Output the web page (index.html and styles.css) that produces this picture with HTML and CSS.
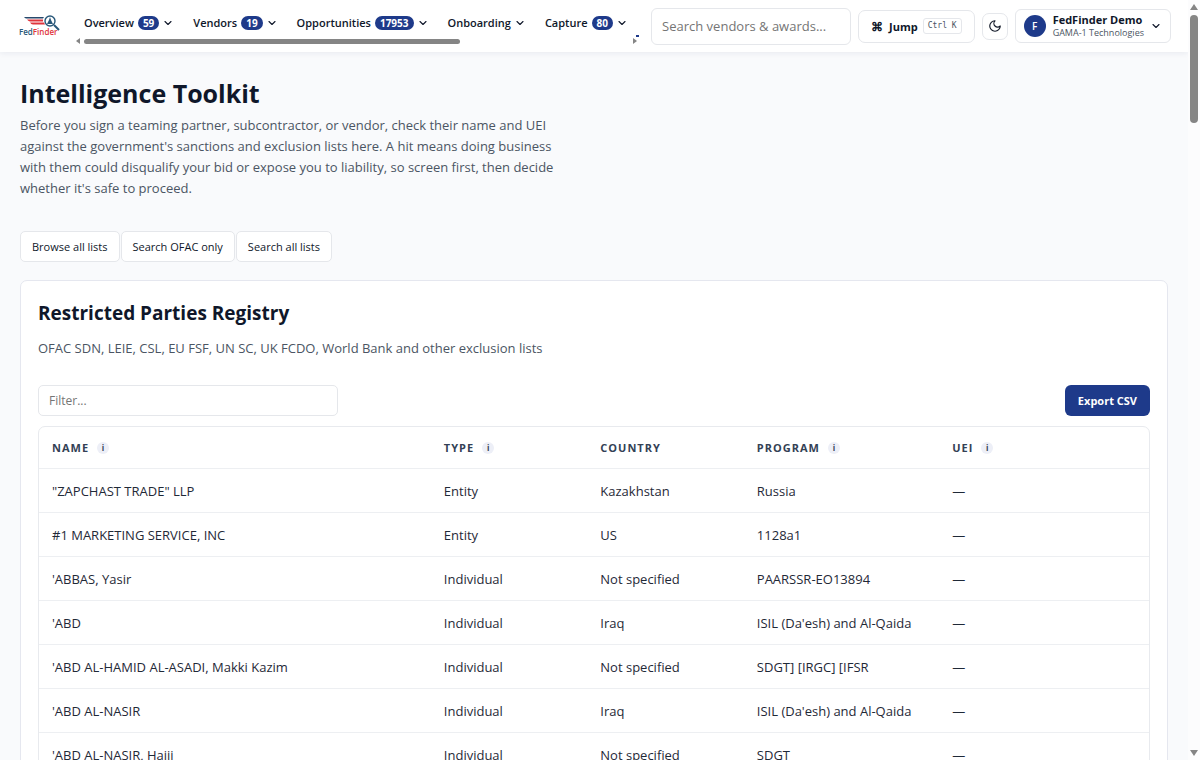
FILE: index.html
```html
<!DOCTYPE html>
<html lang="en">
<head>
<meta charset="utf-8">
<title>Intelligence Toolkit - FedFinder</title>
<link rel="stylesheet" href="styles.css">
</head>
<body>
<svg class="defs" aria-hidden="true">
  <symbol id="chevron" viewBox="0 0 8 8"><path d="M1 2.5 4 5.5 7 2.5" fill="none" stroke="currentColor" stroke-width="1.1" stroke-linecap="round" stroke-linejoin="round"/></symbol>
</svg>
<div class="app">
  <div class="page">
    <header class="topbar">
      <a class="logo" href="#" aria-label="FedFinder home">
        <svg viewBox="0 0 42 22" width="42" height="22">
          <path d="M6 2h20l-1 1.500H8Q7 3 6 2z" fill="#27496d"/>
          <path d="M9 4.500h16v2H12Q10 6 9 4.500zM12 7.500h14l1 2H15q-2 0-3-2z" fill="#e0343c"/>
          <circle cx="32" cy="6" r="5" fill="#fff" stroke="#285779" stroke-width="1.400"/>
          <path d="m32 2 1 3 2 4h-6l2-4z" fill="#285779"/>
          <path d="m36 10 5 5" stroke="#285779" stroke-width="2"/>
          <text x="1" y="20" class="logo-text"><tspan fill="#285779">Fed</tspan><tspan fill="#e0343c">Finder</tspan></text>
        </svg>
      </a>
      <div class="nav-wrap">
        <nav class="nav">
          <button type="button">Overview <span class="badge">59</span><svg class="chev"><use href="#chevron"/></svg></button>
          <button type="button">Vendors <span class="badge">19</span><svg class="chev"><use href="#chevron"/></svg></button>
          <button type="button">Opportunities <span class="badge">17953</span><svg class="chev"><use href="#chevron"/></svg></button>
          <button type="button">Onboarding <svg class="chev"><use href="#chevron"/></svg></button>
          <button type="button">Capture <span class="badge">80</span><svg class="chev"><use href="#chevron"/></svg></button>
        </nav>
        <div class="hscroll" aria-hidden="true">
          <svg width="4" height="6" viewBox="0 0 4 6"><path d="M4 0v6L0 3z" fill="#858585"/></svg>
          <div class="htrack"><div class="hthumb"></div></div>
          <svg width="4" height="6" viewBox="0 0 4 6"><path d="M0 0v6l4-3z" fill="#858585"/></svg>
          <span class="peek"></span>
        </div>
      </div>
      <input class="search" type="search" placeholder="Search vendors &amp; awards..." aria-label="Search vendors and awards">
      <button type="button" class="jump"><span class="cmd">⌘</span>Jump<kbd>Ctrl K</kbd></button>
      <button type="button" class="theme" aria-label="Dark mode"><svg viewBox="0 0 24 24" width="14" height="14"><path d="M12 3a6 6 0 0 0 9 9 9 9 0 1 1-9-9z" fill="none" stroke="#111827" stroke-width="2" stroke-linejoin="round"/></svg></button>
      <button type="button" class="account">
        <span class="avatar">F</span>
        <span class="who"><strong>FedFinder Demo</strong><span>GAMA-1 Technologies</span></span>
        <svg class="chev"><use href="#chevron"/></svg>
      </button>
    </header>
    <main class="content">
      <h1>Intelligence Toolkit</h1>
      <p class="intro">Before you sign a teaming partner, subcontractor, or vendor, check their name and UEI against the government's sanctions and exclusion lists here. A hit means doing business with them could disqualify your bid or expose you to liability, so screen first, then decide whether it's safe to proceed.</p>
      <div class="tabs">
        <button type="button">Browse all lists</button>
        <button type="button">Search OFAC only</button>
        <button type="button">Search all lists</button>
      </div>
      <section class="card">
        <h2>Restricted Parties Registry</h2>
        <p class="sub">OFAC SDN, LEIE, CSL, EU FSF, UN SC, UK FCDO, World Bank and other exclusion lists</p>
        <div class="tools">
          <input class="filter" type="text" placeholder="Filter..." aria-label="Filter">
          <button type="button" class="export">Export CSV</button>
        </div>
        <div class="table-box">
          <table>
            <colgroup><col class="c-name"><col class="c-type"><col class="c-country"><col class="c-program"><col></colgroup>
            <thead><tr><th>NAME<span class="info">i</span></th><th>TYPE<span class="info">i</span></th><th>COUNTRY</th><th>PROGRAM<span class="info">i</span></th><th>UEI<span class="info">i</span></th></tr></thead>
            <tbody>
              <tr><td>"ZAPCHAST TRADE" LLP</td><td>Entity</td><td>Kazakhstan</td><td>Russia</td><td>—</td></tr>
              <tr><td>#1 MARKETING SERVICE, INC</td><td>Entity</td><td>US</td><td>1128a1</td><td>—</td></tr>
              <tr><td>'ABBAS, Yasir</td><td>Individual</td><td>Not specified</td><td>PAARSSR-EO13894</td><td>—</td></tr>
              <tr><td>'ABD</td><td>Individual</td><td>Iraq</td><td>ISIL (Da'esh) and Al-Qaida</td><td>—</td></tr>
              <tr><td>'ABD AL-HAMID AL-ASADI, Makki Kazim</td><td>Individual</td><td>Not specified</td><td>SDGT] [IRGC] [IFSR</td><td>—</td></tr>
              <tr><td>'ABD AL-NASIR</td><td>Individual</td><td>Iraq</td><td>ISIL (Da'esh) and Al-Qaida</td><td>—</td></tr>
              <tr><td>'ABD AL-NASIR, Hajji</td><td>Individual</td><td>Not specified</td><td>SDGT</td><td>—</td></tr>
            </tbody>
          </table>
        </div>
      </section>
    </main>
  </div>
  <div class="vscroll" aria-hidden="true">
    <svg width="8" height="6" viewBox="0 0 8 6"><path d="M4 0 8 6H0z" fill="#858585"/></svg>
    <div class="vtrack"><div class="vthumb"></div></div>
    <svg width="8" height="6" viewBox="0 0 8 6"><path d="M0 0h8L4 6z" fill="#858585"/></svg>
  </div>
</div>
</body>
</html>
```
FILE: styles.css
```css
* { box-sizing: border-box; }
body { margin: 0; font-family: "Open Sans", "Noto Sans", sans-serif; font-size: 13px; color: #0f172a; background: #f9fafc; }
button, input { font: inherit; color: inherit; }
button { display: flex; align-items: center; padding: 0; border: 0; background: none; white-space: nowrap; }
input::placeholder { color: #757575; opacity: 1; }
.defs { position: absolute; width: 0; height: 0; }
.app { display: flex; height: 100vh; overflow: hidden; }
.page { flex: 1; min-width: 0; overflow: hidden; }
.chev { width: 8px; height: 8px; flex: none; }

.topbar { display: flex; align-items: center; height: 52px; padding: 0 17px 0 18px; background: #fff; box-shadow: 0 1px 6px rgba(30, 41, 90, 0.08); }
.logo { display: flex; margin-right: 16px; }
.logo-text { font: 600 8px "Open Sans", sans-serif; }
.nav-wrap { flex: 1; min-width: 0; align-self: stretch; padding-top: 12px; }
.nav { display: flex; gap: 21px; height: 21px; padding-left: 8px; overflow: hidden; }
.nav button { flex: none; font-size: 11px; font-weight: 600; }
.nav .chev { margin-left: 5px; }
.badge { margin-left: 4px; padding: 0 5px; border-radius: 8px; background: #1e3a8a; color: #fff; font-size: 10px; font-weight: 700; line-height: 14px; }
.hscroll { position: relative; display: flex; align-items: center; gap: 4px; margin-top: 5px; height: 6px; }
.htrack { flex: 1; }
.hthumb { width: 69%; height: 5px; border-radius: 3px; background: #858585; }
.peek { position: absolute; right: -2px; top: -3px; width: 3px; height: 2px; background: #1e3a8a; }
.search { width: 200px; height: 37px; margin-left: 14px; padding: 0 10px; border: 1px solid #e5e7eb; border-radius: 6px; background: #fff; font-size: 13px; }
.jump { height: 33px; margin-left: 7px; padding: 0 12px; border: 1px solid #e5e7eb; border-radius: 7px; font-size: 11px; font-weight: 700; }
.cmd { margin-right: 6px; font-size: 12px; }
kbd { margin-left: 5px; padding: 0 4px; border: 1px solid #e5e7eb; border-radius: 3px; font: 8px/14px "DejaVu Sans Mono", monospace; color: #4b5563; }
.theme { justify-content: center; width: 26px; height: 27px; margin-left: 7px; border: 1px solid #e5e7eb; border-radius: 7px; }
.account { height: 34px; margin-left: 7px; padding: 0 10px 0 8px; border: 1px solid #e5e7eb; border-radius: 6px; }
.avatar { display: grid; place-items: center; width: 22px; height: 22px; margin-right: 7px; border-radius: 50%; background: #1e3a8a; color: #fff; font-size: 10px; font-weight: 600; }
.who { display: grid; margin-right: 8px; text-align: left; font-size: 9px; line-height: 12px; color: #4b5563; }
.who strong { font-size: 11px; line-height: 14px; font-weight: 700; color: #0f172a; }

.content { padding: 23px 20px 0; }
h1 { margin: 0; font-size: 25px; line-height: 36px; font-weight: 700; }
.intro { max-width: 550px; margin: 4px 0 32px; line-height: 21px; color: #4b5563; }
.tabs { display: flex; gap: 1px; margin-bottom: 18px; }
.tabs button { height: 31px; padding: 0 11px; border: 1px solid #e5e7eb; border-radius: 5px; background: #fff; font-size: 11px; }
.card { padding: 19px 17px; border: 1px solid #e5e7ef; border-radius: 7px; background: #fff; }
h2 { margin: 0; font-size: 19px; line-height: 26px; font-weight: 700; }
.sub { margin: 12px 0 27px; line-height: 20px; color: #4b5563; }
.tools { display: flex; justify-content: space-between; align-items: center; margin-bottom: 10px; }
.filter { width: 300px; height: 31px; padding: 0 10px; border: 1px solid #e5e7eb; border-radius: 5px; font-size: 12px; }
.export { height: 31px; padding: 0 13px; border-radius: 6px; background: #1e3a8a; color: #fff; font-size: 11px; font-weight: 700; }
.table-box { border: 1px solid #e8eaee; border-radius: 7px; overflow: hidden; }
table { width: 100%; table-layout: fixed; border-collapse: collapse; }
.c-name { width: 35.3%; }
.c-type, .c-country { width: 14.1%; }
.c-program { width: 17.6%; }
th, td { padding: 1px 13px 0; text-align: left; border-bottom: 1px solid #edeff2; }
th { height: 41px; font-size: 11px; font-weight: 700; letter-spacing: 1px; color: #334155; }
td { height: 44px; font-size: 13px; color: #1f2937; }
.info { display: inline-grid; place-items: center; width: 12px; height: 12px; margin-left: 8px; border-radius: 50%; background: #edeff7; font-size: 8px; letter-spacing: 0; line-height: 12px; vertical-align: 1px; }

.vscroll { display: flex; flex-direction: column; align-items: center; width: 12px; padding: 4px 0; background: #fcfcfd; }
.vtrack { flex: 1; padding-top: 5px; }
.vthumb { width: 8px; height: 108px; border-radius: 4px; background: #858585; }
```
